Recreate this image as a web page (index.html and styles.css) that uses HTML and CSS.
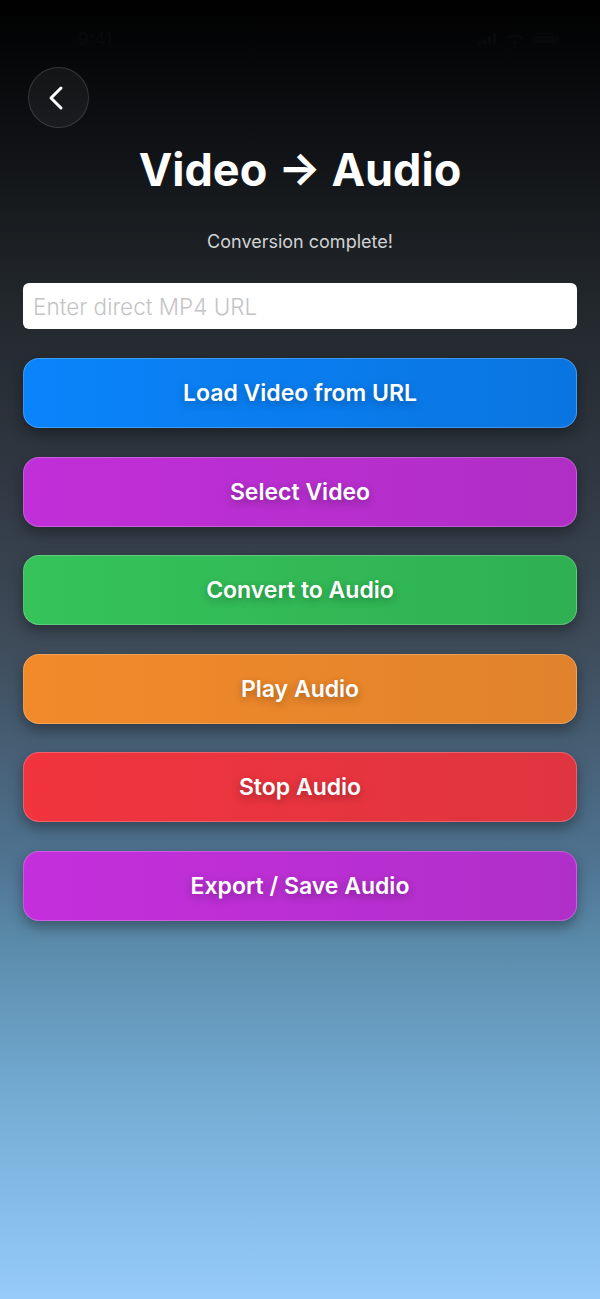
FILE: index.html
```html
<html>
<head>
  <link rel="stylesheet" href="styles.css">
</head>
<body>
  <div class="screen">
    <div class="status-bar">
      <span class="clock">9:41</span>
      <span class="status-icons">
        <svg width="20" height="12" viewBox="0 0 20 12"><rect x="0" y="8" width="3" height="4" rx="1"/><rect x="5" y="6" width="3" height="6" rx="1"/><rect x="10" y="3" width="3" height="9" rx="1"/><rect x="15" y="0" width="3" height="12" rx="1"/></svg>
        <svg width="18" height="13" viewBox="0 0 18 13"><path d="M9 12.5l3-3.4a4.4 4.4 0 0 0-6 0z M1 4.6a11.5 11.5 0 0 1 16 0l-1.8 2a8.8 8.8 0 0 0-12.4 0z"/></svg>
        <svg width="28" height="13" viewBox="0 0 28 13"><rect x="0.5" y="0.5" width="24" height="12" rx="3.5" fill="none" stroke="#08090b"/><rect x="2.5" y="2.5" width="20" height="8" rx="2"/><rect x="25.5" y="4.5" width="2" height="4" rx="1"/></svg>
      </span>
    </div>

    <div class="top-row">
      <button class="back-btn">
        <svg width="22" height="26" viewBox="0 0 22 26"><path d="M15 3 L5 13 L15 23" fill="none" stroke="#ffffff" stroke-width="3" stroke-linecap="round" stroke-linejoin="round"/></svg>
      </button>
    </div>

    <h1 class="title">Video → Audio</h1>
    <p class="status-text">Conversion complete!</p>

    <div class="controls">
      <input class="url-input" type="text" placeholder="Enter direct MP4 URL">
      <button class="action-btn btn-blue">Load Video from URL</button>
      <button class="action-btn btn-purple">Select Video</button>
      <button class="action-btn btn-green">Convert to Audio</button>
      <button class="action-btn btn-orange">Play Audio</button>
      <button class="action-btn btn-red">Stop Audio</button>
      <button class="action-btn btn-magenta">Export / Save Audio</button>
    </div>
  </div>
</body>
</html>
```

FILE: styles.css
```css
html, body {
  margin: 0;
  padding: 0;
}

body {
  font-family: Inter, 'Noto Sans', sans-serif;
  width: 600px;
  height: 1299px;
  overflow: hidden;
  background: linear-gradient(to bottom,
    #000000 0px,
    #0e1013 130px,
    #22272b 300px,
    #2e3640 460px,
    #3e4b59 640px,
    #4f7391 860px,
    #5a8aa9 940px,
    #74acd4 1100px,
    #96cbfa 1299px);
}

.screen {
  display: flex;
  flex-direction: column;
  height: 1299px;
}

.status-bar {
  display: flex;
  justify-content: space-between;
  align-items: center;
  height: 54px;
  padding: 0 40px 0 78px;
  color: #08090b;
  fill: #08090b;
}

.clock {
  font-size: 17px;
  font-weight: 600;
  margin-top: 24px;
}

.status-icons {
  display: flex;
  gap: 8px;
  align-items: center;
  margin-top: 24px;
}

.top-row {
  padding: 13px 0 0 28px;
}

.back-btn {
  width: 61px;
  height: 61px;
  border-radius: 50%;
  border: 1px solid rgba(255, 255, 255, 0.14);
  background: rgba(255, 255, 255, 0.05);
  display: flex;
  align-items: center;
  justify-content: center;
  padding: 0 3px 0 0;
}

.title {
  margin: 12px 0 0;
  text-align: center;
  color: #ffffff;
  font-size: 45px;
  font-weight: 700;
  line-height: 60px;
}

.status-text {
  margin: 31px 0 0;
  text-align: center;
  color: #d0d2d4;
  font-size: 18px;
  line-height: 22px;
}

.controls {
  display: flex;
  flex-direction: column;
  padding: 0 23px;
  margin-top: 30px;
}

.url-input {
  height: 46px;
  border: none;
  border-radius: 6px;
  background: #ffffff;
  padding: 0 10px;
  font-family: Inter, 'Noto Sans', sans-serif;
  font-size: 22.5px;
  font-weight: 300;
  color: #222222;
  box-sizing: border-box;
  outline: none;
}

.url-input::placeholder {
  color: #c4c4c7;
}

.action-btn {
  height: 70px;
  margin-top: 28.6px;
  border-radius: 16px;
  border: 1px solid rgba(255, 255, 255, 0.22);
  font-family: Inter, 'Noto Sans', sans-serif;
  font-size: 23px;
  font-weight: 600;
  color: #ffffff;
  text-shadow: 0 3px 9px rgba(0, 0, 0, 0.3);
  box-shadow: 0 6px 14px rgba(0, 0, 0, 0.35);
}

.url-input + .action-btn {
  margin-top: 29px;
}

.btn-blue {
  background: linear-gradient(to right, #0a84fb, #0a75e0);
}

.btn-purple {
  background: linear-gradient(to right, #c02fd8, #b02ec6);
}

.btn-green {
  background: linear-gradient(to right, #35c35a, #2fb052);
}

.btn-orange {
  background: linear-gradient(to right, #f28a2a, #e0832c);
}

.btn-red {
  background: linear-gradient(to right, #f1343e, #df3540);
}

.btn-magenta {
  background: linear-gradient(to right, #c42fdc, #b02fc9);
}
```
